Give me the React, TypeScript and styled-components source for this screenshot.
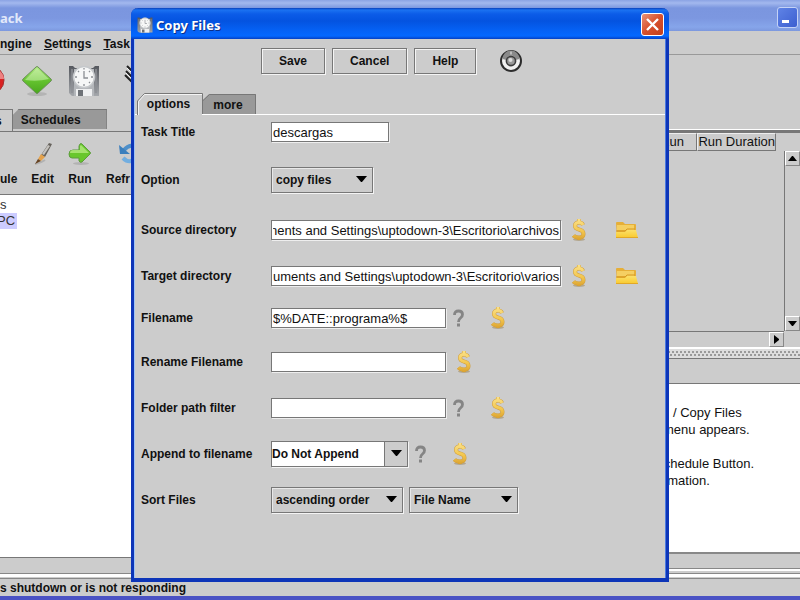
import React, { useState } from "react";
import styled, { createGlobalStyle } from "styled-components";

const GlobalStyle = createGlobalStyle`
  *, *::before, *::after { box-sizing: border-box; }
  html, body { margin: 0; }
  body {
    font-family: "Liberation Sans", Arial, sans-serif;
    font-size: 13px;
    line-height: 16px;
    color: #111;
    background: #ccc;
  }
  button, input, select { font: inherit; color: inherit; margin: 0; }
`;

const BOLD = "bold 12px/16px 'Liberation Sans', Arial, sans-serif";

/* ---------- main window ---------- */

const AppWindow = styled.main`
  position: relative;
  display: flex;
  flex-direction: column;
  min-height: 100vh;
  overflow: hidden;
  background: #ccc;
`;

const MainTitleBar = styled.header`
  display: flex;
  align-items: center;
  justify-content: space-between;
  height: 31px;
  padding: 4px 2px 0 0;
  background: linear-gradient(#8ba3e4 0, #a3b8ee 3px, #7b96df 8px, #7c97e0 18px, #86a5ea 27px, #7c98de 31px);
`;

const MainTitle = styled.h1`
  margin: 0;
  font: bold 13px/20px "Noto Sans", sans-serif;
  color: #e2e9fa;
`;

const MinimizeButton = styled.button`
  display: flex;
  width: 21px;
  height: 21px;
  padding: 0;
  border: 1px solid #c4d2f6;
  border-radius: 3px;
  background: linear-gradient(135deg, #5f83e6, #3c5fd0);
`;

const MenuBar = styled.nav`
  display: flex;
  align-items: center;
  gap: 12px;
  height: 24px;
  padding-top: 2px;
  border-bottom: 1px solid #999;
`;

const MenuItem = styled.button<{ $plain?: boolean }>`
  padding: 0;
  border: 0;
  background: none;
  font: ${BOLD};
  &::first-letter { text-decoration: ${(p) => (p.$plain ? "none" : "underline")}; }
`;

const MainToolbar = styled.div`
  display: flex;
  align-items: center;
  gap: 15px;
  height: 51px;
`;

const BareButton = styled.button`
  display: flex;
  flex: none;
  padding: 0;
  border: 0;
  background: none;
`;

const Split = styled.div`
  display: grid;
  flex: 1;
  grid-template-columns: minmax(0, 1fr) 160px;
`;

const LeftPane = styled.section`
  display: flex;
  flex-direction: column;
`;

const MainTabs = styled.div`
  display: flex;
  align-items: stretch;
  height: 26px;
  padding-top: 3px;
  border-bottom: 1px solid #777;
`;

const MainTab = styled.button<{ $active?: boolean }>`
  margin-bottom: ${(p) => (p.$active ? 0 : 2)}px;
  padding: ${(p) => (p.$active ? "0 10px 0 0" : "0 25px 0 8px")};
  border: 0;
  border-right: 1px solid #777;
  border-top: 1px solid #777;
  background: ${(p) => (p.$active ? "#ccc" : "#999")};
  font: ${BOLD};
  text-indent: ${(p) => (p.$active ? "-5px" : "0")};
  clip-path: ${(p) => (p.$active ? "none" : "polygon(6px 0, 100% 0, 100% 100%, 0 100%, 0 6px)")};
`;

const ActionBar = styled.div`
  display: flex;
  gap: 14px;
  height: 63px;
  padding-top: 9px;
  border-bottom: 1px solid #777;
`;

const Action = styled.button<{ $wide?: boolean }>`
  display: flex;
  flex: none;
  flex-direction: column;
  align-items: center;
  gap: 5px;
  width: ${(p) => (p.$wide ? "48px" : "auto")};
  height: 48px;
  padding: 0;
  border: 0;
  background: none;
  font: ${BOLD};
`;

const ActionLabel = styled.span`
  align-self: flex-start;
`;

const Tree = styled.ul`
  flex: 1;
  margin: 0;
  padding: 2px 0;
  list-style: none;
  border-bottom: 1px solid #777;
  background: #fff;
`;

const TreeItem = styled.li<{ $selected?: boolean }>`
  width: max-content;
  padding-right: ${(p) => (p.$selected ? 2 : 0)}px;
  background: ${(p) => (p.$selected ? "#ccccff" : "transparent")};
  color: #333;
  text-indent: ${(p) => (p.$selected ? "-3px" : "0")};
`;

const LeftFooter = styled.div`
  height: 16px;
  border-bottom: 1px solid #888;
`;

const RightPane = styled.section`
  display: flex;
  flex-direction: column;
  margin-top: 23px;
  border-top: 1px solid #fff;
`;

const TableArea = styled.div`
  display: grid;
  grid-template-columns: minmax(0, 1fr) 16px;
  grid-template-rows: 198px 16px;
  border-top: 3px solid #777;
`;

const RunTable = styled.table`
  align-self: start;
  border-collapse: separate;
  border-spacing: 0;
  width: 136px;
`;

const Th = styled.th<{ $wide?: boolean }>`
  height: 18px;
  width: ${(p) => (p.$wide ? 79 : 57)}px;
  padding: 0 ${(p) => (p.$wide ? 0 : 12)}px 0 0;
  border: 1px solid #777;
  border-top-color: #eee;
  border-left-color: #eee;
  font-weight: normal;
  text-align: right;
  white-space: nowrap;
`;

const VerticalBar = styled.div`
  display: flex;
  flex-direction: column;
  justify-content: space-between;
  margin-top: 18px;
  border-left: 1px solid #777;
`;

const HorizontalBar = styled.div`
  display: flex;
  justify-content: flex-end;
  border-top: 1px solid #777;
`;

const ScrollButton = styled.button`
  display: flex;
  align-items: center;
  justify-content: center;
  width: 15px;
  height: 15px;
  padding: 0;
  border: 1px solid #888;
  border-top-color: #fff;
  border-left-color: #fff;
  background: #ccc;
`;

const Divider = styled.div`
  height: 12px;
  border-top: 2px solid #fff;
  border-bottom: 1px solid #777;
  background:
    radial-gradient(circle at 1px 1px, #999 1px, transparent 1px) 0 2px / 4px 3px repeat-x,
    radial-gradient(circle at 3px 1px, #999 1px, transparent 1px) 0 5px / 4px 3px repeat-x,
    #ddd;
`;

const HelpText = styled.div`
  flex: 1;
  margin-top: 24px;
  padding-top: 21px;
  border-top: 1px solid #777;
  border-bottom: 2px solid #888;
  background: #fff;
`;

const HelpLine = styled.p<{ $indent: number }>`
  margin: 0 0 1px;
  min-height: 16px;
  padding-left: ${(p) => p.$indent}px;
`;

const RightFooter = styled.div`
  height: 20px;
  border-bottom: 1px solid #888;
  background: linear-gradient(#ccc 14px, #888 14px, #888 15px, #fff 15px, #fff 17px, #ccc 17px);
`;

const StatusRule = styled.div`
  height: 5px;
  border-top: 3px solid #fff;
  border-bottom: 1px solid #888;
`;

const StatusBar = styled.footer`
  height: 21px;
  padding-top: 1px;
  border-bottom: 4px solid #4a52c4;
  font: ${BOLD};
`;

/* ---------- dialog ---------- */

const Dialog = styled.section`
  position: absolute;
  top: 8px;
  left: 131px;
  right: 131px;
  border-radius: 7px 7px 0 0;
  border: solid #0d35b8;
  border-width: 0 3px 4px;
  background: #ccc;
  box-shadow: inset 1px 0 #9fc4f5, inset -1px 0 #4a7ae0;
`;

const DialogTitleBar = styled.header`
  display: flex;
  align-items: center;
  gap: 3px;
  height: 31px;
  margin: 0 -3px;
  padding: 2px 5px 0 6px;
  border-radius: 7px 7px 0 0;
  background: linear-gradient(#0a3fb8 0, #1b72f2 2px, #0c5ce8 6px, #0453e0 13px, #0562f6 23px, #0468ff 28px, #0540c4 31px);
`;

const DialogTitle = styled.h2`
  flex: 1;
  margin: 0;
  font: bold 13px/20px "Noto Sans", sans-serif;
  color: #fff;
  text-shadow: 1px 1px #0a2f8a;
`;

const CloseButton = styled.button`
  display: flex;
  align-items: center;
  justify-content: center;
  width: 23px;
  height: 23px;
  padding: 0;
  border: 1px solid #fff;
  border-radius: 3px;
  background: linear-gradient(135deg, #e8937a, #d8502c 50%, #c2401c);
`;

const DialogActions = styled.div`
  display: flex;
  align-items: center;
  gap: 7px;
  padding: 9px 0 0 127px;
`;

const PushButton = styled.button`
  height: 26px;
  padding: 0 17px;
  border: 1px solid #777;
  background: #ccc;
  box-shadow: inset 1px 1px #f4f4f4, 1px 1px #f4f4f4;
  font: ${BOLD};
`;

const TargetButton = styled(BareButton)`
  margin-left: 16px;
`;

const DialogTabs = styled.div`
  display: flex;
  align-items: flex-end;
  height: 41px;
  margin: 0 1px;
  padding-left: 2px;
  background: linear-gradient(#fff, #fff) bottom / 100% 1px no-repeat;
`;

const TabShape = styled.svg`
  position: absolute;
  inset: 0;
  z-index: -1;
`;

const DialogTab = styled.button<{ $active: boolean }>`
  position: relative;
  z-index: 0;
  width: ${(p) => (p.$active ? 66 : 53)}px;
  height: ${(p) => (p.$active ? 22 : 21)}px;
  padding: 0 3px 0 0;
  border: 0;
  background: none;
  font: ${BOLD};
`;

const Form = styled.form`
  padding: 4px 8px 65px 7px;
`;

const Row = styled.div<{ $gap?: number }>`
  display: grid;
  grid-template-columns: 130px minmax(0, 1fr);
  align-items: center;
  min-height: 26px;
  margin-bottom: ${(p) => p.$gap ?? 20}px;
`;

const Label = styled.label`
  font: ${BOLD};
`;

const Controls = styled.div`
  display: flex;
  align-items: center;
  gap: 6px;
`;

const TextBox = styled.input<{ $width: number; $end?: boolean }>`
  width: ${(p) => p.$width}px;
  height: 20px;
  padding: 0 1px;
  border: 1px solid #777;
  border-radius: 0;
  outline: 0;
  background: #fff;
  box-shadow: 1px 1px #eee;
  text-align: ${(p) => (p.$end ? "right" : "left")};
`;

const SelectFrame = styled.div<{ $width: number }>`
  position: relative;
  width: ${(p) => p.$width}px;
  height: 26px;
`;

const SelectBox = styled.select<{ $editable?: boolean }>`
  width: 100%;
  height: 100%;
  padding: 0 24px 0 ${(p) => (p.$editable ? 0 : 4)}px;
  appearance: none;
  border: 1px solid #777;
  border-radius: 0;
  background: ${(p) => (p.$editable ? "linear-gradient(90deg, #fff calc(100% - 23px), #777 0, #777 calc(100% - 22px), #ccc 0)" : "#ccc")};
  box-shadow: ${(p) => (p.$editable ? "1px 1px #f4f4f4" : "inset 1px 1px #e8e8e8, 1px 1px #f4f4f4")};
  font: ${BOLD};
`;

const SelectArrow = styled.svg`
  position: absolute;
  top: 9px;
  right: 6px;
  pointer-events: none;
`;

const IconButton = styled(BareButton)<{ $space?: number }>`
  margin-left: ${(p) => p.$space ?? 0}px;
`;

/* ---------- icons ---------- */

const FloppyClock = ({ size = 32 }: { size?: number }) => (
  <svg width={size} height={size} viewBox="0 0 32 32" aria-hidden="true">
    <defs>
      <linearGradient id="case" x2="0" y2="1">
        <stop offset="0" stopColor="#55585e" />
        <stop offset="1" stopColor="#a4a7ab" />
      </linearGradient>
    </defs>
    <path d="M1 1h4l2 2h18l2-2h4v30H4l-3-3z" fill="url(#case)" />
    <path d="M6 4h20v27H6z" fill="#b4b7bb" />
    <path d="M4 4v24M28 4v24" stroke="#8d9095" strokeWidth="1.5" />
    <circle cx="16" cy="12" r="10.500" fill="#f6f7f7" stroke="#c5c8cb" strokeWidth="1.5" />
    <path d="M16 6v7h4M16 3v1.500M16 19v2M7 12h2M23 12h2M10 6l1 1M22 6l-1 1M10 18l1-1M22 18l-1-1" fill="none" stroke="#8b8f94" strokeWidth="1.300" />
    <path d="M8 24h16v7H8z" fill="#eff0f1" />
    <path d="M10 25h5v6h-5z" fill="#6e7277" />
  </svg>
);

const GreenDiamond = () => (
  <svg width="32" height="32" viewBox="0 0 32 32" aria-hidden="true">
    <defs>
      <linearGradient id="diamond" x2="0" y2="1">
        <stop offset="0" stopColor="#b2ea84" />
        <stop offset=".5" stopColor="#66c430" />
        <stop offset="1" stopColor="#4aa71d" />
      </linearGradient>
    </defs>
    <ellipse cx="16" cy="29" rx="10" ry="2" fill="#b4b4b4" />
    <path d="M15 2q1-1 2 0l13 12q1 1 0 2L17 28q-1 1-2 0L2 16q-1-1 0-2z" fill="url(#diamond)" stroke="#6c8f5a" />
    <path d="M16 3 28 14Q16 17 4 15z" fill="#d0f2b2" opacity=".55" />
  </svg>
);

const RedStop = () => (
  <svg width="6" height="32" viewBox="26 0 6 32" aria-hidden="true">
    <circle cx="16" cy="15" r="14" fill="#d92020" stroke="#a03030" />
    <path d="M26 6q4 4 4 8h-4z" fill="#ee8080" />
  </svg>
);

const Stripes = () => (
  <svg width="34" height="32" viewBox="0 0 34 32" aria-hidden="true">
    <path d="M12 1l14 14M11 6l14 14M10 10l12 12" stroke="#222" strokeWidth="2" />
    <path d="M12 3l14 14M11 8l14 14" stroke="#f2f2f2" />
  </svg>
);

const Pencil = () => (
  <svg width="22" height="25" viewBox="0 0 22 25" aria-hidden="true">
    <path d="M3 23q6-1 10-4" stroke="#b2b2b2" strokeWidth="2" fill="none" />
    <path d="M17 2l3 1-7 13-4-2z" fill="#66625c" />
    <path d="M16 4l2 1-6 9-2-1z" fill="#c4c2be" />
    <path d="M9 13l4 3-4 4-3-2z" fill="#e4a24c" />
    <path d="M6 18l3 2-6 3z" fill="#674321" />
  </svg>
);

const RunArrow = () => (
  <svg width="24" height="25" viewBox="0 0 24 25" aria-hidden="true">
    <ellipse cx="13" cy="22.500" rx="8" ry="1.500" fill="#b2b2b2" />
    <path d="M12 3q1-1 2 0l8 8q1 1 0 2l-8 8q-2 1-3-1v-3H4q-3 0-3-4t4-4h6V5z" fill="#68c72c" stroke="#5c9c3c" />
    <path d="M13 4l8 8H2q0-3 3-3h7V5z" fill="#b4ea80" opacity=".8" />
  </svg>
);

const Refresh = () => (
  <svg width="25" height="25" viewBox="0 0 25 25" aria-hidden="true">
    <path d="M20 8Q13 1 6 9" fill="none" stroke="#4d8fc9" strokeWidth="4" />
    <path d="M1 4l1 9h10z" fill="#3b7fbd" />
    <path d="M5 17q7 7 14-1" fill="none" stroke="#72aee0" strokeWidth="4" />
    <path d="M24 20V11H13z" fill="#5b9ad2" />
  </svg>
);

const Dollar = () => (
  <svg width="16" height="24" viewBox="0 0 16 24" aria-hidden="true">
    <defs>
      <linearGradient id="gold" gradientUnits="userSpaceOnUse" x1="0" y1="0" x2="0" y2="24">
        <stop offset="0" stopColor="#fbe48e" />
        <stop offset=".55" stopColor="#f3c64e" />
        <stop offset="1" stopColor="#d59a2a" />
      </linearGradient>
    </defs>
    <ellipse cx="8" cy="21.500" rx="6" ry="1.500" fill="#b3a68c" />
    <path d="M12 7Q11 4.500 8 4.500 4 4.500 4 8q0 2.500 4 3.500 4.500 1 4.500 4.500T8 19.500q-4 0-5.500-2M8 1v3M8 19v3" fill="none" stroke="#cf9d3c" strokeWidth="4" />
    <path d="M12 7Q11 4.500 8 4.500 4 4.500 4 8q0 2.500 4 3.500 4.500 1 4.500 4.500T8 19.500q-4 0-5.500-2M8 1v3M8 19v3" fill="none" stroke="url(#gold)" strokeWidth="3" />
  </svg>
);

const Folder = () => (
  <svg width="24" height="20" viewBox="0 0 24 20" aria-hidden="true">
    <defs>
      <linearGradient id="flap" x2="0" y2="1">
        <stop offset="0" stopColor="#fbe06a" />
        <stop offset="1" stopColor="#f9c92c" />
      </linearGradient>
    </defs>
    <path d="M1 3q0-1 1-1h6l2 2h10q1 0 1 1v12H2z" fill="#e6af38" />
    <path d="M2 5h17v5H2z" fill="#f5cf62" />
    <path d="M1 18V12h9l2-2h9l2 8z" fill="url(#flap)" />
    <path d="M1 11h9l2-2h8" fill="none" stroke="#d79a20" />
    <path d="M1 17h22v1H1z" fill="#e2a826" />
  </svg>
);

const Question = () => (
  <svg width="13" height="20" viewBox="0 0 13 20" aria-hidden="true">
    <path d="M2.500 7q0-4 4-4t4 3.500q0 2-2 3.500-2 1.500-2 4" fill="none" stroke="#858585" strokeWidth="2.800" />
    <path d="M5 15.500h3v3H5z" fill="#858585" />
  </svg>
);

const Target = () => (
  <svg width="24" height="24" viewBox="0 0 24 24" aria-hidden="true">
    <circle cx="12" cy="12" r="10" fill="#f1f1f1" stroke="#2c2c2c" strokeWidth="2" />
    <path d="M3.500 10a8.500 8.500 0 0 1 17 0l-4 1a4 4 0 0 0-9 0z" fill="#8a8a8a" />
    <path d="M12 2.500v3" stroke="#eee" />
    <circle cx="12" cy="12" r="4.600" fill="#999" stroke="#3c3c3c" strokeWidth="1.600" />
    <circle cx="11.500" cy="11" r="2" fill="#ddd" />
  </svg>
);

const Arrow = ({ dir }: { dir: "up" | "down" | "right" }) => (
  <svg width="9" height="9" viewBox="0 0 9 9" aria-hidden="true">
    <path d={{ up: "M0 7h9L5 2H4z", down: "M0 2h9L5 7H4z", right: "M2 0v9l5-4V4z" }[dir]} fill="#000" />
  </svg>
);

/* ---------- pieces ---------- */

type DropDownProps = { id: string; width: number; options: string[]; editable?: boolean; label?: string };

const DropDown = ({ id, width, options, editable, label }: DropDownProps) => (
  <SelectFrame $width={width}>
    <SelectBox id={id} $editable={editable} aria-label={label}>
      {options.map((o) => (
        <option key={o}>{o}</option>
      ))}
    </SelectBox>
    <SelectArrow width="11" height="7" viewBox="0 0 11 7" aria-hidden="true">
      <path d="M0 0h11L6 6H5z" fill="#000" />
    </SelectArrow>
  </SelectFrame>
);

/* Long paths stay scrolled to their last folder. */
const showEnd = (el: HTMLInputElement | null) => {
  if (el) el.scrollLeft = el.scrollWidth;
};

const PathBox = ({ id, value }: { id: string; value: string }) => (
  <TextBox id={id} ref={showEnd} $width={290} $end defaultValue={value} />
);

const VariableButton = ({ space }: { space: number }) => (
  <IconButton type="button" $space={space} aria-label="Insert variable">
    <Dollar />
  </IconButton>
);

const HintButton = () => (
  <IconButton type="button" aria-label="Hint">
    <Question />
  </IconButton>
);

const BrowseButton = () => (
  <IconButton type="button" $space={22} aria-label="Browse">
    <Folder />
  </IconButton>
);

export default function App() {
  const [tab, setTab] = useState("options");

  return (
    <>
      <GlobalStyle />
      <AppWindow>
        <MainTitleBar>
          <MainTitle>ack</MainTitle>
          <MinimizeButton aria-label="Minimize">
            <svg width="19" height="19" viewBox="0 0 19 19" aria-hidden="true">
              <path d="M4 12h7v3H4z" fill="#fff" />
            </svg>
          </MinimizeButton>
        </MainTitleBar>
        <MenuBar>
          <MenuItem $plain>ngine</MenuItem>
          <MenuItem>Settings</MenuItem>
          <MenuItem>Task</MenuItem>
        </MenuBar>
        <MainToolbar>
          <BareButton aria-label="Stop"><RedStop /></BareButton>
          <BareButton aria-label="Start"><GreenDiamond /></BareButton>
          <BareButton aria-label="Backup"><FloppyClock /></BareButton>
          <BareButton aria-label="Log"><Stripes /></BareButton>
        </MainToolbar>
        <Split>
          <LeftPane>
            <MainTabs>
              <MainTab $active>s</MainTab>
              <MainTab>Schedules</MainTab>
            </MainTabs>
            <ActionBar>
              <Action>
                <svg width="17" height="25" aria-hidden="true" />
                ule
              </Action>
              <Action><Pencil />Edit</Action>
              <Action><RunArrow />Run</Action>
              <Action $wide>
                <Refresh />
                <ActionLabel>Refr</ActionLabel>
              </Action>
            </ActionBar>
            <Tree>
              <TreeItem>s</TreeItem>
              <TreeItem $selected>PC</TreeItem>
            </Tree>
            <LeftFooter />
          </LeftPane>
          <RightPane>
            <TableArea>
              <RunTable>
                <thead>
                  <tr>
                    <Th>Run</Th>
                    <Th $wide>Run Duration</Th>
                  </tr>
                </thead>
              </RunTable>
              <VerticalBar>
                <ScrollButton aria-label="Scroll up"><Arrow dir="up" /></ScrollButton>
                <ScrollButton aria-label="Scroll down"><Arrow dir="down" /></ScrollButton>
              </VerticalBar>
              <HorizontalBar>
                <ScrollButton aria-label="Scroll right"><Arrow dir="right" /></ScrollButton>
              </HorizontalBar>
            </TableArea>
            <Divider />
            <HelpText>
              <HelpLine $indent={33}>/ Copy Files</HelpLine>
              <HelpLine $indent={23}>menu appears.</HelpLine>
              <HelpLine $indent={0} />
              <HelpLine $indent={15}>Schedule Button.</HelpLine>
              <HelpLine $indent={2}>information.</HelpLine>
            </HelpText>
            <RightFooter />
          </RightPane>
        </Split>
        <StatusRule />
        <StatusBar>s shutdown or is not responding</StatusBar>

        <Dialog role="dialog" aria-labelledby="dialog-title">
          <DialogTitleBar>
            <FloppyClock size={16} />
            <DialogTitle id="dialog-title">Copy Files</DialogTitle>
            <CloseButton aria-label="Close">
              <svg width="13" height="13" viewBox="0 0 13 13" aria-hidden="true">
                <path d="M1 1l11 11M12 1L1 12" stroke="#fff" strokeWidth="2.4" />
              </svg>
            </CloseButton>
          </DialogTitleBar>
          <DialogActions>
            <PushButton>Save</PushButton>
            <PushButton>Cancel</PushButton>
            <PushButton>Help</PushButton>
            <TargetButton aria-label="Target"><Target /></TargetButton>
          </DialogActions>
          <DialogTabs role="tablist">
            <DialogTab role="tab" aria-selected={tab === "options"} $active onClick={() => setTab("options")}>
              <TabShape width="66" height="22" viewBox="0 0 66 22" aria-hidden="true">
                <path d="M0 22V8l7-7h58v21z" fill="#ccc" />
                <path d="M.5 22V8l7-7.500H65.500V21" fill="none" stroke="#777" />
                <path d="M1.500 22V8.500l6-7H65" fill="none" stroke="#f4f4f4" />
              </TabShape>
              options
            </DialogTab>
            <DialogTab role="tab" aria-selected={tab === "more"} $active={false} onClick={() => setTab("more")}>
              <TabShape width="53" height="21" viewBox="0 0 53 21" aria-hidden="true">
                <path d="M0 20V6l6-6h47v20z" fill="#999" />
                <path d="M0 6.500L6.500.500H52.500V20" fill="none" stroke="#777" />
              </TabShape>
              more
            </DialogTab>
          </DialogTabs>
          <Form onSubmit={(e) => e.preventDefault()}>
            <Row $gap={22}>
              <Label htmlFor="title">Task Title</Label>
              <Controls>
                <TextBox id="title" $width={118} defaultValue="descargas" />
              </Controls>
            </Row>
            <Row $gap={24}>
              <Label htmlFor="option">Option</Label>
              <Controls>
                <DropDown id="option" width={102} options={["copy files"]} />
              </Controls>
            </Row>
            <Row>
              <Label htmlFor="source">Source directory</Label>
              <Controls>
                <PathBox id="source" value={"nents and Settings\\uptodown-3\\Escritorio\\archivos"} />
                <VariableButton space={4} />
                <BrowseButton />
              </Controls>
            </Row>
            <Row $gap={16}>
              <Label htmlFor="target">Target directory</Label>
              <Controls>
                <PathBox id="target" value={"uments and Settings\\uptodown-3\\Escritorio\\varios"} />
                <VariableButton space={4} />
                <BrowseButton />
              </Controls>
            </Row>
            <Row $gap={18}>
              <Label htmlFor="filename">Filename</Label>
              <Controls>
                <TextBox id="filename" $width={175} defaultValue="$%DATE::programa%$" />
                <HintButton />
                <VariableButton space={19} />
              </Controls>
            </Row>
            <Row>
              <Label htmlFor="rename">Rename Filename</Label>
              <Controls>
                <TextBox id="rename" $width={175} />
                <VariableButton space={4} />
              </Controls>
            </Row>
            <Row>
              <Label htmlFor="filter">Folder path filter</Label>
              <Controls>
                <TextBox id="filter" $width={175} />
                <HintButton />
                <VariableButton space={19} />
              </Controls>
            </Row>
            <Row>
              <Label htmlFor="append">Append to filename</Label>
              <Controls>
                <DropDown id="append" width={137} options={["Do Not Append"]} editable />
                <HintButton />
                <VariableButton space={19} />
              </Controls>
            </Row>
            <Row $gap={0}>
              <Label htmlFor="sort">Sort Files</Label>
              <Controls>
                <DropDown id="sort" width={132} options={["ascending order", "descending order"]} />
                <DropDown id="sort-by" width={109} options={["File Name"]} label="Sort by" />
              </Controls>
            </Row>
          </Form>
        </Dialog>
      </AppWindow>
    </>
  );
}
